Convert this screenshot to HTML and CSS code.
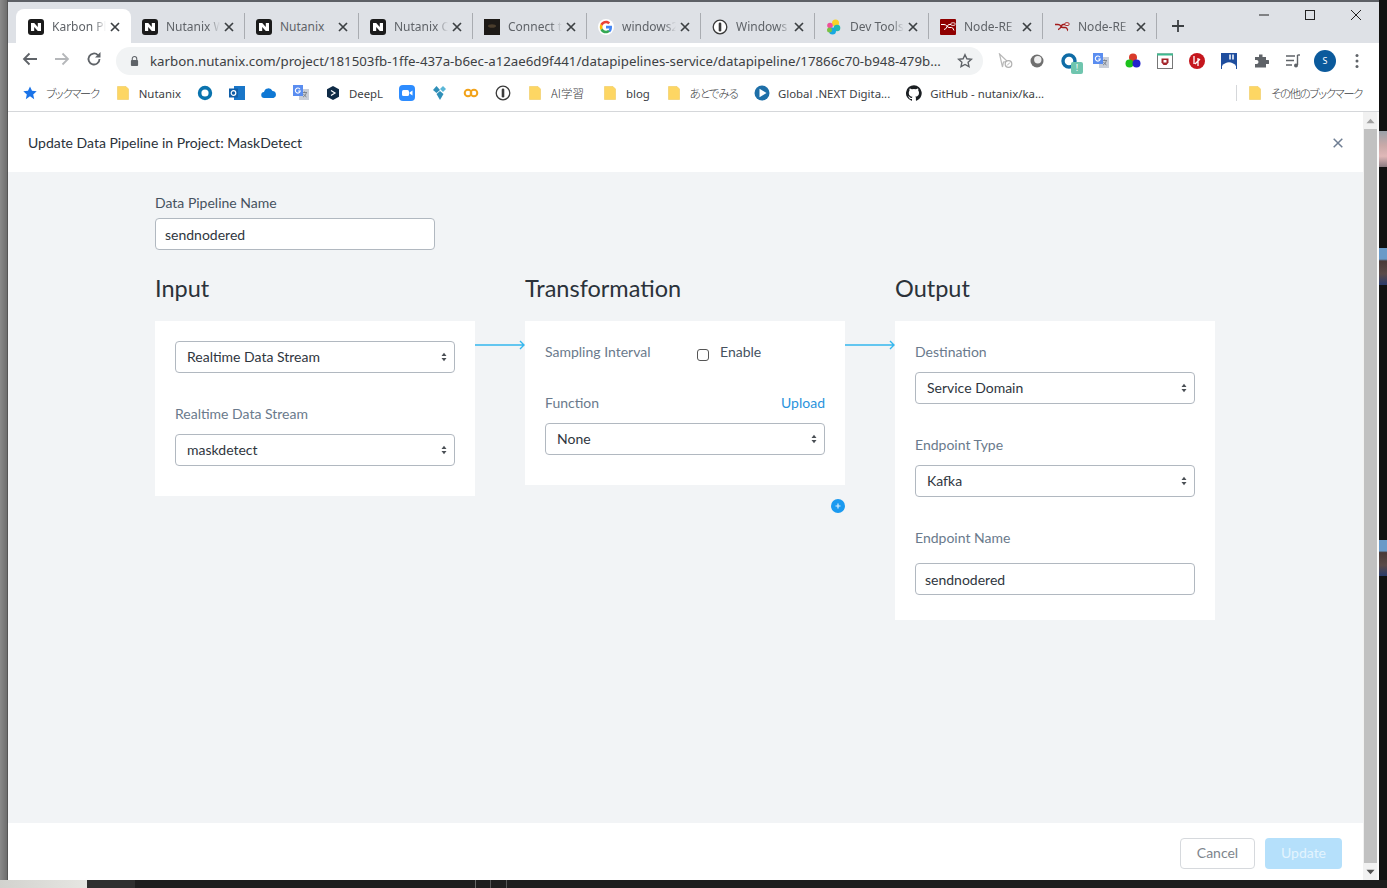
FILE: index.html
```html
<!DOCTYPE html>
<html lang="ja">
<head>
<meta charset="utf-8">
<title>Karbon Platform Services</title>
<link rel="stylesheet" href="styles.css">
</head>
<body>
<svg class="defs" width="0" height="0">
  <symbol id="nx" viewBox="0 0 16 16"><rect width="16" height="16" rx="3" fill="#1b1b1b"/><path d="M3 4h3.200l3.600 4V4H13v8H9.800L6.200 8v4H3z" fill="#fff"/></symbol>
  <symbol id="x" viewBox="0 0 10 10"><path d="M1 1l8 8M9 1l-8 8" stroke="#3c4043" stroke-width="1.700" fill="none"/></symbol>
  <symbol id="folder" viewBox="0 0 16 16"><path d="M2.500 1.500h8.500l2.500 2.500v10.500h-11z" fill="#fdd663" stroke="#efc95f" stroke-width=".6"/></symbol>
  <symbol id="onep" viewBox="0 0 16 16"><circle cx="8" cy="8" r="6.800" fill="#fff" stroke="#3a3a3a" stroke-width="1.300"/><rect x="6.700" y="3.500" width="2.600" height="9" rx="1.300" fill="#3a3a3a"/></symbol>
  <symbol id="nr" viewBox="0 0 16 16"><path d="M1 5.500h3c3 0 3 3 5 3M4 10.500c3 0 3-5 5-5h2M9 8.500h2.500c2 0 2 3 2.500 3" stroke="#a31b1b" stroke-width="1.300" fill="none"/><rect x="11" y="3.800" width="4" height="2.600" rx=".8" fill="#fff" stroke="#a31b1b"/></symbol>
  <symbol id="updown" viewBox="0 0 6 10"><path d="M3 .8L5.500 4H.5zM3 9.200L.5 6h5z" fill="#4a4f55"/></symbol>
  <symbol id="arrow" viewBox="0 0 50 10"><path d="M0 5h49M45 1l4 4-4 4" stroke="#35b7ee" stroke-width="1.400" fill="none"/></symbol>
  <symbol id="gtr" viewBox="0 0 16 16"><rect x="6" y="4" width="10" height="11" fill="#c9ced8"/><path d="M9 7.500h5M11.500 6.500v1M10 12c2-1 3-2.500 3.300-4.500M10.500 9c.8 1.300 1.800 2.300 3 3" stroke="#6f7680" stroke-width=".8" fill="none"/><rect width="10" height="11" fill="#5a8df0"/><path d="M7 4.300A2.500 2.500 0 1 0 7.300 6H5.200" stroke="#fff" stroke-width="1.100" fill="none"/></symbol>
</svg>

<div class="desktop">
  <div class="side-left"></div>
  <div class="window">
    <div class="tabstrip">
      <div class="tab active"><svg class="fav"><use href="#nx"/></svg><span class="tab-title">Karbon Pl</span><svg class="tab-x"><use href="#x"/></svg></div>
      <div class="tab"><svg class="fav"><use href="#nx"/></svg><span class="tab-title">Nutanix W</span><svg class="tab-x"><use href="#x"/></svg></div>
      <div class="tab"><svg class="fav"><use href="#nx"/></svg><span class="tab-title plain">Nutanix</span><svg class="tab-x"><use href="#x"/></svg></div>
      <div class="tab"><svg class="fav"><use href="#nx"/></svg><span class="tab-title">Nutanix C</span><svg class="tab-x"><use href="#x"/></svg></div>
      <div class="tab"><svg class="fav" viewBox="0 0 16 16"><rect width="16" height="16" fill="#1d1a17"/><ellipse cx="8" cy="7" rx="4" ry="1.800" fill="#4a3d2c"/></svg><span class="tab-title">Connect t</span><svg class="tab-x"><use href="#x"/></svg></div>
      <div class="tab"><svg class="fav" viewBox="0 0 16 16"><circle cx="8" cy="8" r="8" fill="#fff"/><path d="M14 8.200c0-.5 0-1-.1-1.400H8v2.700h3.400c-.2.900-.7 1.600-1.400 2.100l2.100 1.700C13.300 12.100 14 10.300 14 8.200z" fill="#4285f4"/><path d="M8 14.300c1.700 0 3.100-.6 4.100-1.500L10 11.100c-.6.400-1.200.6-2 .6-1.600 0-2.900-1-3.400-2.500L2.400 10.900C3.400 13 5.500 14.300 8 14.300z" fill="#34a853"/><path d="M4.600 9.200C4.300 8.400 4.300 7.600 4.600 6.800L2.400 5.100c-.8 1.800-.8 4 0 5.800z" fill="#fbbc05"/><path d="M8 4.300c.9 0 1.700.3 2.300.9l1.800-1.800C11.100 2.400 9.700 1.700 8 1.700c-2.500 0-4.600 1.400-5.600 3.400l2.200 1.700C5.100 5.300 6.400 4.300 8 4.300z" fill="#ea4335"/></svg><span class="tab-title">windows2</span><svg class="tab-x"><use href="#x"/></svg></div>
      <div class="tab"><svg class="fav"><use href="#onep"/></svg><span class="tab-title">Windows</span><svg class="tab-x"><use href="#x"/></svg></div>
      <div class="tab"><svg class="fav" viewBox="0 0 16 16"><circle cx="9.500" cy="4" r="3.500" fill="#f9d227"/><circle cx="4" cy="6.500" r="2.800" fill="#ef5098"/><circle cx="11" cy="9" r="3.300" fill="#22b8af"/><circle cx="6.500" cy="12" r="3.500" fill="#17a8e0"/><circle cx="3.500" cy="11" r="2.500" fill="#7ac143"/></svg><span class="tab-title">Dev Tools</span><svg class="tab-x"><use href="#x"/></svg></div>
      <div class="tab"><svg class="fav" viewBox="0 0 16 16"><rect width="16" height="16" rx="1" fill="#8f0000"/><path d="M1 5.500h3c3 0 3 3 5 3M4 10.500c3 0 3-5 5-5h2M9 8.500h2.500c2 0 2 3 2.500 3" stroke="#fff" stroke-width="1" fill="none"/><rect x="11" y="3.800" width="4" height="2.600" rx=".8" fill="#8f0000" stroke="#fff" stroke-width=".8"/></svg><span class="tab-title">Node-RE</span><svg class="tab-x"><use href="#x"/></svg></div>
      <div class="tab"><svg class="fav"><use href="#nr"/></svg><span class="tab-title">Node-RE</span><svg class="tab-x"><use href="#x"/></svg></div>
      <svg class="newtab" viewBox="0 0 12 12"><path d="M6 0v12M0 6h12" stroke="#3c4043" stroke-width="1.800"/></svg>
      <div class="winctl">
        <svg viewBox="0 0 12 12"><path d="M1 6h10" stroke="#222" stroke-width="1"/></svg>
        <svg viewBox="0 0 12 12"><rect x="1.500" y="1.500" width="9" height="9" fill="none" stroke="#222"/></svg>
        <svg viewBox="0 0 12 12"><path d="M1 1l10 10M11 1L1 11" stroke="#222" stroke-width="1" fill="none"/></svg>
      </div>
    </div>

    <div class="toolbar">
      <svg class="nav" viewBox="0 0 16 16"><path d="M15 8H2M7.500 2.500L2 8l5.500 5.500" stroke="#5f6368" stroke-width="1.800" fill="none"/></svg>
      <svg class="nav" viewBox="0 0 16 16"><path d="M1 8h13M8.500 2.500L14 8l-5.500 5.500" stroke="#b5b7ba" stroke-width="1.800" fill="none"/></svg>
      <svg class="nav" viewBox="0 0 16 16"><path d="M13.500 8a5.500 5.500 0 1 1-1.600-3.900" stroke="#5f6368" stroke-width="1.800" fill="none"/><path d="M14.500 1v5.500H9z" fill="#5f6368"/></svg>
      <div class="omnibox">
        <svg class="lock" viewBox="0 0 10 12"><path d="M2.500 5V3.500a2.500 2.500 0 0 1 5 0V5" stroke="#5f6368" stroke-width="1.200" fill="none"/><rect x="1" y="5" width="8" height="6.500" rx="1" fill="#5f6368"/></svg>
        <span class="url">karbon.nutanix.com/project/181503fb-1ffe-437a-b6ec-a12ae6d9f441/datapipelines-service/datapipeline/17866c70-b948-479b...</span>
        <svg class="star" viewBox="0 0 16 16"><path d="M8 1.700l1.900 4.100 4.500.5-3.300 3 .9 4.400L8 11.500l-4 2.200.9-4.400-3.300-3 4.500-.5z" fill="none" stroke="#5f6368" stroke-width="1.400"/></svg>
      </div>
      <div class="exts">
        <svg viewBox="0 0 16 16"><path d="M2.500 1l8 7.500-4 .5-1 5z" fill="#fff" stroke="#b9b9b9" stroke-width="1.200"/><circle cx="11.500" cy="11" r="3.300" fill="#fff" stroke="#b0b0b0" stroke-width="1.200"/><path d="M10 12.500l3-3" stroke="#b0b0b0"/></svg>
        <svg viewBox="0 0 16 16"><circle cx="8" cy="8" r="6.500" fill="#6f6f6f"/><circle cx="8.800" cy="6.800" r="3.700" fill="#efefef"/></svg>
        <div class="ext-badged"><svg viewBox="0 0 16 16"><circle cx="8" cy="8" r="6" fill="none" stroke="#0f6ca6" stroke-width="3.400"/></svg><span class="badge">!</span></div>
        <svg><use href="#gtr"/></svg>
        <svg viewBox="0 0 16 16"><circle cx="8" cy="4.500" r="4" fill="#d93a2b"/><circle cx="4.500" cy="10.500" r="4" fill="#1bc21b"/><circle cx="11.500" cy="10.500" r="4" fill="#2222cc"/></svg>
        <svg viewBox="0 0 16 16"><rect x=".5" y="1" width="15" height="14.500" fill="#fff" stroke="#777"/><rect y=".5" width="16" height="2" fill="#3dba8f"/><path d="M4.500 5.500h7v4l-2 2.500h-3l-2-2.500z" fill="#a3242a"/><rect x="6.500" y="7" width="3" height="2.500" fill="#fff"/></svg>
        <svg viewBox="0 0 16 16"><circle cx="8" cy="8" r="8" fill="#c5161d"/><path d="M5 3v8M9 5v8M6 11l5-5" stroke="#fff" stroke-width="1.300" fill="none"/></svg>
        <svg viewBox="0 0 16 16"><rect width="16" height="16" fill="#1f4e9e"/><path d="M1 13c4-5 10-5 14 0v3H1z" fill="#fff"/><path d="M9 1.500v5M12 1.500v5" stroke="#fff" stroke-width="1.500"/></svg>
        <svg viewBox="0 0 16 16"><path d="M6 1.500h3.500v2.500H13v3H15a2 2 0 0 1 0 4h-2v3.500H2V11H3.500a2 2 0 0 0 0-4H2V4h4z" fill="#5f6368"/></svg>
        <svg viewBox="0 0 16 16"><path d="M1 3h9M1 7.500h8M1 12h6" stroke="#5f6368" stroke-width="1.400"/><path d="M12.500 2v10" stroke="#5f6368" stroke-width="1.400"/><path d="M12.500 2h2.500" stroke="#5f6368" stroke-width="1.400"/><circle cx="11" cy="12.500" r="2" fill="#5f6368"/></svg>
        <span class="avatar">S</span>
        <svg viewBox="0 0 16 16"><circle cx="8" cy="2.500" r="1.500" fill="#5f6368"/><circle cx="8" cy="8" r="1.500" fill="#5f6368"/><circle cx="8" cy="13.500" r="1.500" fill="#5f6368"/></svg>
      </div>
    </div>

    <div class="bookmarks">
      <div class="bm"><svg viewBox="0 0 16 16"><path d="M8 1.500l2 4.300 4.700.5-3.500 3.200 1 4.700L8 11.300l-4.200 2.900 1-4.700-3.500-3.200 4.700-.5z" fill="#1a73e8"/></svg><span class="bm-t cjk kana">ブックマーク</span></div>
      <div class="bm"><svg><use href="#folder"/></svg><span class="bm-t">Nutanix</span></div>
      <div class="bm"><svg viewBox="0 0 16 16"><circle cx="8" cy="8" r="5.400" fill="none" stroke="#0a73ae" stroke-width="3.600"/></svg></div>
      <div class="bm"><svg viewBox="0 0 16 16"><rect x="5" y="1" width="11" height="14" fill="#1976c8"/><rect y="3.500" width="9" height="9" fill="#0f5ea8"/><circle cx="4.500" cy="8" r="2.300" fill="none" stroke="#fff" stroke-width="1.200"/></svg></div>
      <div class="bm"><svg viewBox="0 0 16 16"><path d="M3.500 13a3 3 0 0 1-.5-6 4.500 4.500 0 0 1 8.500-1 3.600 3.600 0 0 1 1 7z" fill="#0f78d4"/></svg></div>
      <div class="bm"><svg><use href="#gtr"/></svg></div>
      <div class="bm"><svg viewBox="0 0 16 16"><path d="M8 1l6 3.300v7.400L8 15l-6-3.300V4.300z" fill="#0f2b46"/><path d="M6 5.500l4 2.500-4 2.500" stroke="#fff" stroke-width="1.200" fill="none"/></svg><span class="bm-t">DeepL</span></div>
      <div class="bm"><svg viewBox="0 0 16 16"><rect width="16" height="16" rx="4" fill="#2d8cff"/><rect x="3" y="5" width="7" height="6" rx="1.500" fill="#fff"/><path d="M10.500 7.500l3-2v5l-3-2z" fill="#fff"/></svg></div>
      <div class="bm"><svg viewBox="0 0 16 16"><path d="M2 5l3.500-4L9 5 5.500 8z" fill="#2f8fb8"/><path d="M9 4l3-3 3 3-3 3z" fill="#5ab7d8"/><path d="M5.500 9l3.500-3 3.500 3L9 15z" fill="#2f8fb8"/></svg></div>
      <div class="bm"><svg viewBox="0 0 16 16"><circle cx="5" cy="8" r="3.300" fill="none" stroke="#f2a31b" stroke-width="2"/><circle cx="11" cy="8" r="3.300" fill="none" stroke="#f2a31b" stroke-width="2"/></svg></div>
      <div class="bm"><svg><use href="#onep"/></svg></div>
      <div class="bm"><svg><use href="#folder"/></svg><span class="bm-t cjk">AI学習</span></div>
      <div class="bm bm-gap"><svg><use href="#folder"/></svg><span class="bm-t">blog</span></div>
      <div class="bm"><svg><use href="#folder"/></svg><span class="bm-t cjk hira">あとでみる</span></div>
      <div class="bm"><svg viewBox="0 0 16 16"><circle cx="8" cy="8" r="7.500" fill="#1e6fa8"/><path d="M5.500 3.800l7 4.200-7 4.200z" fill="#fff"/></svg><span class="bm-t">Global .NEXT Digita...</span></div>
      <div class="bm"><svg viewBox="0 0 16 16"><path d="M8 .2a8 8 0 0 0-2.500 15.600c.4.100.5-.2.500-.4v-1.400c-2.200.5-2.700-1-2.700-1-.4-.9-.9-1.200-.9-1.200-.7-.5.100-.5.100-.5.800.1 1.200.8 1.200.8.700 1.200 1.900.9 2.300.7.100-.5.300-.9.500-1.100-1.800-.2-3.700-.9-3.700-4 0-.9.300-1.600.8-2.100-.1-.2-.4-1 .1-2.100 0 0 .7-.2 2.200.8a7.600 7.600 0 0 1 4 0c1.500-1 2.200-.8 2.200-.8.400 1.100.2 1.900.1 2.100.5.600.8 1.300.8 2.100 0 3.100-1.900 3.700-3.700 3.900.3.300.6.800.6 1.500v2.200c0 .2.100.5.600.4A8 8 0 0 0 8 .2z" fill="#1b1f23"/></svg><span class="bm-t">GitHub - nutanix/ka...</span></div>
      <div class="bm-other"><svg><use href="#folder"/></svg><span class="bm-t cjk kana">その他のブックマーク</span></div>
    </div>

    <div class="viewport">
      <main class="modal">
        <header class="modal-head">
          <h1>Update Data Pipeline in Project: MaskDetect</h1>
          <svg class="modal-x" viewBox="0 0 10 10"><path d="M.7.700l8.600 8.600M9.300.700L.7 9.300" stroke="#6f7e93" stroke-width="1.500" fill="none"/></svg>
        </header>
        <div class="modal-body">
          <label class="lbl first">Data Pipeline Name</label>
          <div class="field name-field">sendnodered</div>
          <div class="flow">
            <section class="col">
              <h2>Input</h2>
              <div class="card">
                <div class="select"><span>Realtime Data Stream</span><svg><use href="#updown"/></svg></div>
                <label class="lbl sp">Realtime Data Stream</label>
                <div class="select"><span>maskdetect</span><svg><use href="#updown"/></svg></div>
              </div>
            </section>
            <svg class="conn" viewBox="0 0 50 10"><use href="#arrow"/></svg>
            <section class="col">
              <h2>Transformation</h2>
              <div class="card">
                <div class="row-sample">
                  <label class="lbl">Sampling Interval</label>
                  <label class="enable"><input type="checkbox">Enable</label>
                </div>
                <div class="row-func">
                  <label class="lbl">Function</label>
                  <a class="upload">Upload</a>
                </div>
                <div class="select"><span>None</span><svg><use href="#updown"/></svg></div>
              </div>
              <svg class="plus" viewBox="0 0 14 14"><circle cx="7" cy="7" r="7" fill="#1b9af0"/><path d="M7 4.500v5M4.500 7h5" stroke="#d9efff" stroke-width="1.200"/></svg>
            </section>
            <svg class="conn" viewBox="0 0 50 10"><use href="#arrow"/></svg>
            <section class="col">
              <h2>Output</h2>
              <div class="card card-out">
                <label class="lbl top">Destination</label>
                <div class="select"><span>Service Domain</span><svg><use href="#updown"/></svg></div>
                <label class="lbl sp">Endpoint Type</label>
                <div class="select"><span>Kafka</span><svg><use href="#updown"/></svg></div>
                <label class="lbl sp sp-last">Endpoint Name</label>
                <div class="field">sendnodered</div>
              </div>
            </section>
          </div>
        </div>
        <footer class="modal-foot">
          <button class="btn btn-cancel">Cancel</button>
          <button class="btn btn-update">Update</button>
        </footer>
      </main>
      <div class="scrollbar">
        <svg class="sb-arrow" viewBox="0 0 10 6"><path d="M5 .5L9.500 5.500H.5z" fill="#a0a0a0"/></svg>
        <div class="sb-thumb"></div>
        <svg class="sb-arrow" viewBox="0 0 10 6"><path d="M5 5.500L.5 .5h9z" fill="#505050"/></svg>
      </div>
    </div>
  </div>
  <div class="side-right"><i class="spot s1"></i><i class="spot s2"></i><i class="spot s3"></i></div>
  <div class="taskstrip"><i class="ts-a"></i><i class="ts-b"></i><i class="ts-c"></i></div>
</div>
</body>
</html>
```
FILE: styles.css
```css
* { box-sizing: border-box; }
html, body { margin: 0; height: 100%; overflow: hidden; }
body { font-family: "Noto Sans", "Noto Sans CJK JP", sans-serif; background: #1e1e1e; }
.defs { position: absolute; }

.desktop {
  display: grid;
  grid-template-columns: 8px 1371px 8px;
  grid-template-rows: 880px 8px;
  width: 1387px;
  height: 888px;
}
.side-left { background: linear-gradient(90deg, #8a8a8a, #6a6a6a); }
.side-right { background: #111; display: flex; flex-direction: column; }
.spot { display: block; width: 8px; }
.s1 { height: 36px; margin-top: 131px; background: linear-gradient(#9aa0a8, #c9a9a8 40%, #e0b8b8 70%, #8a7a80); }
.s2 { height: 37px; margin-top: 81px; background: linear-gradient(#6a9ac8 30%, #4a3a38 35%, #5a4a48 70%, #2a3a6a); }
.s3 { height: 36px; margin-top: 255px; background: linear-gradient(#6a9ac8 30%, #4a3a38 35%, #5a4a48 70%, #2a3a6a); }
.taskstrip { grid-column: 1 / 4; display: flex; background: #1e1e1e; }
.ts-a { width: 87px; background: linear-gradient(90deg, #d2d2ce, #e6e6e2); }
.ts-b { width: 48px; background: #2f2f2f; }
.ts-c {
  flex: 1;
  background:
    linear-gradient(#666, #666) 340px 0 / 1px 100% no-repeat,
    linear-gradient(#555, #555) 355px 0 / 1px 100% no-repeat,
    linear-gradient(#555, #555) 371px 0 / 1px 100% no-repeat;
}

.window {
  display: flex;
  flex-direction: column;
  background: #fff;
  box-shadow: -1px 0 0 #555;
  min-height: 0;
}

/* tab strip */
.tabstrip {
  display: flex;
  align-items: flex-end;
  height: 43px;
  padding-left: 8px;
  background: #dee1e6;
  border-top: 2px solid #5d6066;
}
.tab {
  display: flex;
  align-items: center;
  width: 114px;
  height: 34px;
  padding: 1px 10px 0 11px;
  border-right: 1px solid #a9acb1;
  border-image: linear-gradient(#dee1e6 15%, #a9acb1 15%, #a9acb1 85%, #dee1e6 85%) 1;
  color: #5f6368;
  font-size: 12px;
}
.tab.active {
  background: #fff;
  border: 0;
  border-radius: 8px 8px 0 0;
  width: 115px;
  padding: 1px 11px 0 12px;
}
.fav { width: 16px; height: 16px; flex: none; }
.tab-title {
  flex: 1;
  min-width: 0;
  margin-left: 8px;
  white-space: nowrap;
  -webkit-mask-image: linear-gradient(90deg, #000 78%, transparent 100%);
  mask-image: linear-gradient(90deg, #000 78%, transparent 100%);
}
.tab-title.plain { -webkit-mask-image: none; mask-image: none; }
.tab-x { width: 10px; height: 10px; flex: none; margin-left: 4px; }
.newtab { width: 12px; height: 12px; margin: 0 0 11px 15px; flex: none; }
.winctl { display: flex; gap: 34px; margin-left: auto; align-self: flex-start; padding: 7px 17px 0 0; }
.winctl svg { width: 12px; height: 12px; display: block; }

/* toolbar */
.toolbar { display: flex; align-items: center; height: 32px; padding-left: 14px; flex: none; }
.nav { width: 16px; height: 16px; margin-right: 16px; flex: none; }
.omnibox {
  display: flex;
  align-items: center;
  width: 867px;
  height: 28px;
  margin: 4px 0 0 -2px;
  padding: 0 10px 0 14px;
  border-radius: 14px;
  background: #f1f3f4;
}
.lock { width: 9px; height: 12px; flex: none; }
.url { margin-left: 11px; flex: 1; white-space: nowrap; font-size: 13.280px; color: #3c4043; }
.star { width: 16px; height: 16px; flex: none; }
.exts { display: flex; align-items: center; gap: 16px; margin-left: 14px; padding-top: 4px; }
.exts > svg { width: 16px; height: 16px; display: block; }
.ext-badged { position: relative; width: 16px; height: 16px; }
.ext-badged svg { width: 16px; height: 16px; display: block; }
.badge {
  position: absolute;
  left: 10px;
  top: 9px;
  width: 12px;
  height: 12px;
  border-radius: 2px;
  background: #6fc5ae;
  color: #fff;
  font-size: 9px;
  line-height: 12px;
  text-align: center;
}
.avatar {
  width: 22px;
  height: 22px;
  margin: 0 -3px;
  border-radius: 50%;
  background: #0b5a9c;
  color: #fff;
  font-size: 9px;
  line-height: 22px;
  text-align: center;
}

/* bookmarks */
.bookmarks {
  display: flex;
  align-items: center;
  gap: 16px;
  height: 37px;
  padding: 0 0 0 14px;
  border-bottom: 1px solid #d5d7da;
  flex: none;
}
.bm, .bm-other { display: flex; align-items: center; gap: 8px; flex: none; }
.bm svg, .bm-other svg { width: 16px; height: 16px; display: block; flex: none; }
.bm-gap { margin-left: 2px; }
.bm-t { font-size: 11.400px; color: #3c4043; white-space: nowrap; }
.bm-other {
  margin-left: auto;
  height: 16px;
  padding: 0 17px 0 10px;
  border-left: 1px solid #d5d7da;
}
.cjk { font-family: "Noto Sans CJK JP", sans-serif; font-size: 11.500px; font-feature-settings: "palt"; font-weight: 300; }
.kana { letter-spacing: -1.450px; }
.hira { letter-spacing: -1px; }

/* modal */
.viewport { flex: 1; display: flex; min-height: 0; }
.modal { flex: 1; display: flex; flex-direction: column; font-family: Lato, sans-serif; min-width: 0; }
.modal-head {
  display: flex;
  align-items: center;
  justify-content: space-between;
  height: 60px;
  padding: 1px 20px 0;
  flex: none;
}
.modal-head h1 { margin: 0; font-size: 14px; font-weight: 400; color: #2b323a; }
.modal-x { width: 10px; height: 10px; }
.modal-body { flex: 1; background: #f2f4f6; padding: 23px 0 0 147px; }
.lbl { display: block; font-size: 14px; line-height: 16px; color: #6a7a8c; }
.lbl.first { color: #46525f; margin-bottom: 7px; }
.field {
  height: 32px;
  width: 280px;
  padding: 0 9px;
  background: #fff;
  border: 1px solid #b1b8c0;
  border-radius: 4px;
  font-size: 14px;
  line-height: 32px;
  color: #2f363e;
}
.flow { display: flex; margin-top: 23px; align-items: flex-start; }
.col { width: 320px; flex: none; }
.col h2 { margin: 0 0 17px; font-size: 23.500px; line-height: 31px; font-weight: 400; color: #2b323a; }
.card { background: #fff; padding: 20px 20px 30px; }
.card-out { padding-bottom: 25px; }
.select {
  display: flex;
  align-items: center;
  justify-content: space-between;
  height: 32px;
  padding: 0 7px 2px 11px;
  background: #fff;
  border: 1px solid #b1b8c0;
  border-radius: 4px;
  font-size: 14px;
  color: #2f363e;
}
.select svg { width: 6px; height: 10px; flex: none; margin-top: 2px; }
.lbl.sp { margin: 33px 0 12px; }
.lbl.top { margin: 3px 0 12px; }
.lbl.sp-last { margin-bottom: 17px; }
.conn { width: 50px; height: 10px; flex: none; margin-top: 67px; }
.row-sample { display: flex; align-items: flex-start; height: 16px; margin-top: 3px; }
.row-sample .lbl { width: 152px; }
.enable { display: flex; align-items: flex-start; height: 16px; line-height: 16px; font-size: 14px; color: #46525f; }
.enable input {
  appearance: none;
  width: 12px;
  height: 12px;
  margin: 5px 11px 0 0;
  background: #fff;
  border: 1px solid #555;
  border-radius: 3px;
}
.row-func { display: flex; justify-content: space-between; margin: 35px 0 12px; }
.upload { font-size: 14px; line-height: 16px; color: #2a93dc; }
.plus { display: block; width: 14px; height: 14px; margin: 14px 0 0 306px; }

.modal-foot {
  display: flex;
  justify-content: flex-end;
  gap: 10px;
  height: 57px;
  padding: 15px 21px 0 0;
  flex: none;
}
.btn { width: 75px; height: 31px; padding: 0 0 2px; border-radius: 4px; font: 14px Lato, sans-serif; }
.btn-cancel { background: #fff; border: 1px solid #d6d9dd; color: #7e858d; }
.btn-update { width: 77px; background: #b5e0fb; border: 0; color: #e3f4fe; }

.scrollbar { width: 16px; flex: none; display: flex; flex-direction: column; align-items: flex-start; background: linear-gradient(90deg, #f1f1f1 14px, #fafafa 14px); }
.sb-arrow { width: 9px; height: 6px; margin: 6px 0 5px 3px; flex: none; }
.sb-thumb { flex: 1; width: 13px; margin-left: 1px; background: #c1c1c1; }
```
